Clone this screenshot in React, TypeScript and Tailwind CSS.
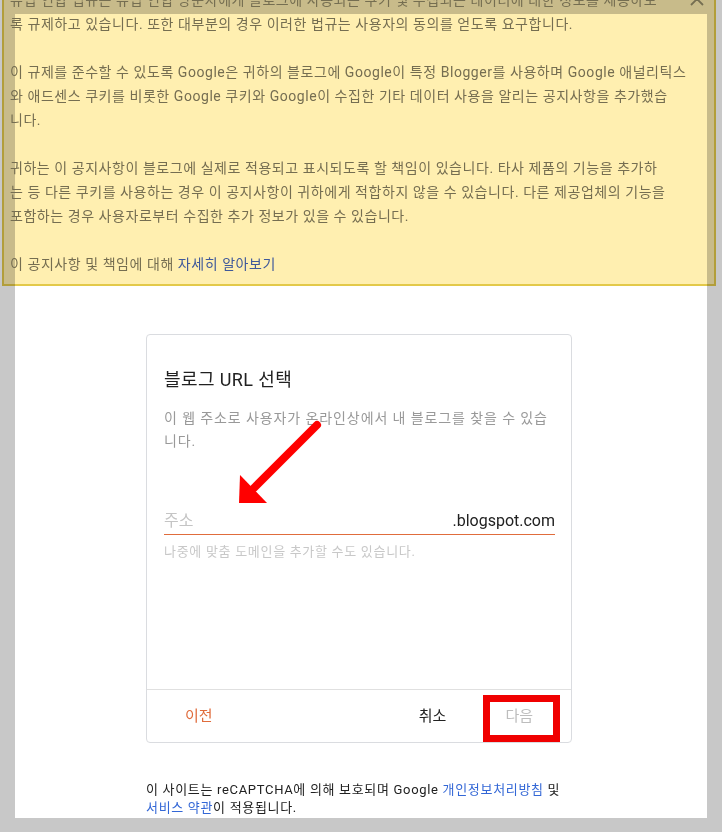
import React from "react";

const font = { fontFamily: 'Roboto, "Noto Sans CJK KR", sans-serif' };

export default function App() {
  return (
    <div className="relative w-[722px] h-[832px] overflow-hidden bg-[#c8c8c8]" style={font}>
      <div className="ml-[15px] mt-[14px] w-[692px] h-[804px] bg-white flex flex-col">
        <div className="-ml-[5px] -mt-[26px] text-[14px] leading-[24px] tracking-[0.55px] text-[#757575] whitespace-nowrap">
          <div>유럽 연합 법규는 유럽 연합 방문자에게 블로그에 사용되는 쿠키 및 수집되는 데이터에 대한 정보를 제공하도</div>
          <div>록 규제하고 있습니다. 또한 대부분의 경우 이러한 법규는 사용자의 동의를 얻도록 요구합니다.</div>
          <div className="h-[24px]" />
          <div>이 규제를 준수할 수 있도록 Google은 귀하의 블로그에 Google이 특정 Blogger를 사용하며 Google 애널리틱스</div>
          <div>와 애드센스 쿠키를 비롯한 Google 쿠키와 Google이 수집한 기타 데이터 사용을 알리는 공지사항을 추가했습</div>
          <div>니다.</div>
          <div className="h-[24px]" />
          <div>귀하는 이 공지사항이 블로그에 실제로 적용되고 표시되도록 할 책임이 있습니다. 타사 제품의 기능을 추가하</div>
          <div>는 등 다른 쿠키를 사용하는 경우 이 공지사항이 귀하에게 적합하지 않을 수 있습니다. 다른 제공업체의 기능을</div>
          <div>포함하는 경우 사용자로부터 수집한 추가 정보가 있을 수 있습니다.</div>
          <div className="h-[24px]" />
          <div>
            이 공지사항 및 책임에 대해 <span className="text-[#3f5fe0]">자세히 알아보기</span>
          </div>
        </div>

        <div className="ml-[131px] mt-[58px] w-[426px] h-[409px] border border-[#dadce0] rounded-[4px] flex flex-col">
          <div className="flex-1 pt-[33px] pl-[17px] pr-[16px]">
            <div className="text-[18px] leading-[24px] tracking-[0.4px] text-[#212121]">블로그 URL 선택</div>
            <div className="mt-[15px] text-[14px] leading-[23px] tracking-[0.9px] text-[#999] whitespace-nowrap">
              <div>이 웹 주소로 사용자가 온라인상에서 내 블로그를 찾을 수 있습</div>
              <div>니다.</div>
            </div>
            <div className="mt-[55px] flex items-center justify-between border-b border-[#e06c3c] h-[27px]">
              <span className="text-[16px] leading-[24px] text-[#c4c4c4]">주소</span>
              <span className="text-[16px] leading-[24px] text-[#212121]">.blogspot.com</span>
            </div>
            <div className="mt-[9px] text-[13px] leading-[16px] tracking-[0.7px] text-[#c8c8c8] whitespace-nowrap">나중에 맞춤 도메인을 추가할 수도 있습니다.</div>
          </div>
          <div className="h-[53px] border-t border-[#e0e0e0] flex items-center justify-between px-[38px] text-[15px]">
            <span className="text-[#e06c3c]">이전</span>
            <div className="flex items-center gap-[59px]">
              <span className="text-[#212121]">취소</span>
              <span className="text-[#bdbdbd]">다음</span>
            </div>
          </div>
        </div>

        <div className="ml-[131px] mt-[38px] text-[13px] leading-[18px] tracking-[0.68px] text-[#212121] whitespace-nowrap">
          <div>
            이 사이트는 reCAPTCHA에 의해 보호되며 Google <span className="text-[#3367d6]">개인정보처리방침</span> 및
          </div>
          <div>
            <span className="text-[#3367d6]">서비스 약관</span>이 적용됩니다.
          </div>
        </div>
      </div>

      {/* close icon */}
      <svg className="absolute left-[689px] top-[-9px]" width="16" height="16" viewBox="0 0 16 16">
        <path d="M2 2 L14 14 M14 2 L2 14" stroke="#757575" strokeWidth="1.8" fill="none" />
      </svg>

      {/* yellow highlight overlay */}
      <div className="absolute left-[2px] top-[-10px] w-[714px] h-[296px] border-2 border-[#e3c94a] bg-[#ffefb0] mix-blend-multiply" />

      {/* red arrow */}
      <svg className="absolute left-0 top-0" width="722" height="832" viewBox="0 0 722 832">
        <line x1="317" y1="425" x2="254" y2="488" stroke="#ff0000" strokeWidth="8" strokeLinecap="round" />
        <polygon points="239,503 240,475 267,503" fill="#ff0000" />
      </svg>

      {/* red box around 다음 */}
      <div className="absolute left-[483px] top-[695px] w-[77px] h-[47px] border-[7px] border-[#f00000]" />
    </div>
  );
}
